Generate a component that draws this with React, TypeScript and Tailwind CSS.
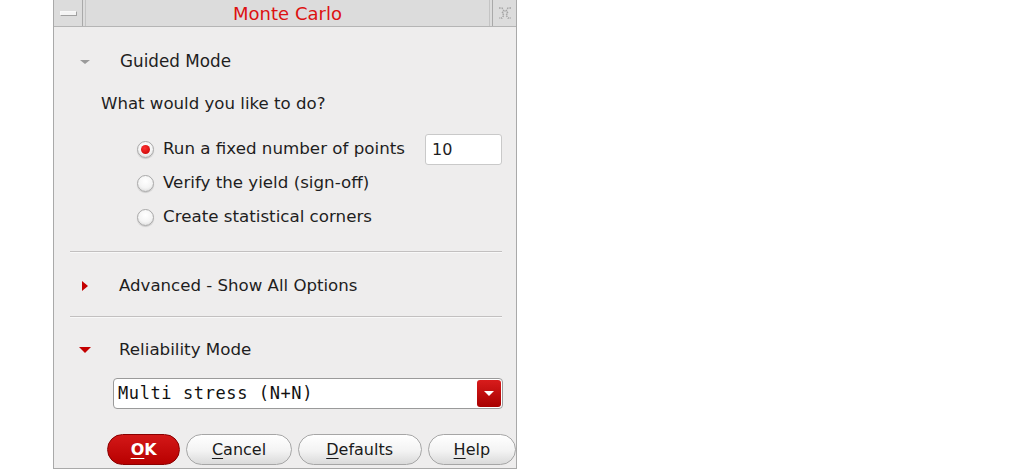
import { useState } from "react"

const ui = "font-['DejaVu_Sans',sans-serif]"

function Radio({ checked }: { checked: boolean }) {
    return (
        <span className="w-[17px] h-[17px] rounded-full border border-[#a9a9a9] bg-[radial-gradient(circle_at_50%_35%,#ffffff_0%,#f4f4f4_55%,#d2d2d2_100%)] shadow-[0_1px_1px_rgba(0,0,0,0.15)] flex items-center justify-center">
            {checked && <span className="w-[9px] h-[9px] rounded-full bg-[radial-gradient(circle_at_40%_35%,#ff3030,#c00000)]" />}
        </span>
    )
}

function PillButton({ label, accel, primary, width }: { label: string; accel: string; primary?: boolean; width: string }) {
    const rest = label.slice(1)
    return (
        <button
            className={
                primary
                    ? `${width} h-[31px] rounded-full border border-[#8a0000] bg-[linear-gradient(#d31818,#b80000)] text-white font-bold text-[16px] flex items-center justify-center`
                    : `${width} h-[31px] rounded-full border border-[#a6a6a6] bg-[linear-gradient(#ffffff,#f3f3f3_55%,#dadada)] text-[#1a1a1a] text-[16px] flex items-center justify-center`
            }
        >
            <span className="underline underline-offset-[3px]">{accel}</span>
            {rest}
        </button>
    )
}

function App() {
    const [points, setPoints] = useState("10")
    const [mode, setMode] = useState(0)

    return (
        <div className={`w-[1013px] h-[474px] bg-white ${ui}`}>
            <div className="ml-[53px] w-[464px] h-[469px] border-l border-r border-b border-[#a9a9a9] bg-[#eeeded] flex flex-col">
                {/* title bar */}
                <div className="h-[27px] flex bg-[#dcdcdc] border-b border-[#b5b5b5]">
                    <div className="w-[29px] border-r border-[#a9a9a9] flex items-center justify-center">
                        <span className="w-[17px] h-[5px] bg-[#f4f4f4] border border-[#a0a0a0] border-t-[#f8f8f8] border-l-[#f8f8f8]" />
                    </div>
                    <div className="flex-1 ml-[2px] border-l border-r border-[#c4c4c4] flex items-center justify-center text-[18px] text-[#dd1111]">
                        Monte Carlo
                    </div>
                    <div className="w-[24px] ml-[2px] border-l border-[#a9a9a9] flex items-center justify-center">
                        <svg width="16" height="16" viewBox="0 0 16 16" fill="none" stroke="#a4a4a4" strokeWidth="1.4" strokeDasharray="1.6 1">
                            <path d="M2 3 L5 3 L7 6 L5 8 L7 10 L5 13 L2 13 M14 3 L11 3 L9 6 L11 8 L9 10 L11 13 L14 13" />
                        </svg>
                    </div>
                </div>

                {/* guided mode */}
                <div className="mt-[20px] h-[30px] flex items-center">
                    <span className="ml-[26px] w-0 h-0 border-l-[5px] border-r-[5px] border-t-[4px] border-l-transparent border-r-transparent border-t-[#9a9a9a]" />
                    <span className="ml-[30px] text-[16.8px] text-[#1e1e1e]">Guided Mode</span>
                </div>

                <div className="mt-[12px] h-[30px] flex items-center pl-[47px] text-[16.6px] text-[#1e1e1e]">
                    What would you like to do?
                </div>

                <div className="mt-[13px] flex flex-col pl-[83px] text-[16.7px] text-[#1e1e1e]">
                    <div className="h-[34px] flex items-center" onClick={() => setMode(0)}>
                        <Radio checked={mode === 0} />
                        <span className="ml-[9px]">Run a fixed number of points</span>
                        <input
                            value={points}
                            onChange={(e) => setPoints(e.target.value)}
                            className="ml-[20px] w-[77px] h-[31px] rounded-[3px] border border-[#c9c9c9] bg-white px-[6px] text-[16px] text-[#1e1e1e] outline-none"
                        />
                    </div>
                    <div className="h-[34px] flex items-center" onClick={() => setMode(1)}>
                        <Radio checked={mode === 1} />
                        <span className="ml-[9px]">Verify the yield (sign-off)</span>
                    </div>
                    <div className="h-[34px] flex items-center" onClick={() => setMode(2)}>
                        <Radio checked={mode === 2} />
                        <span className="ml-[9px]">Create statistical corners</span>
                    </div>
                </div>

                <div className="mt-[17px] ml-[16px] w-[432px] h-[2px] bg-[#c2c0c0] border-b border-[#f8f8f8]" />

                {/* advanced */}
                <div className="mt-[18px] h-[30px] flex items-center">
                    <span className="ml-[28px] w-0 h-0 border-t-[5px] border-b-[5px] border-l-[6px] border-t-transparent border-b-transparent border-l-[#c40000]" />
                    <span className="ml-[31px] text-[16.6px] text-[#1e1e1e]">Advanced - Show All Options</span>
                </div>

                <div className="mt-[15px] ml-[16px] w-[432px] h-[2px] bg-[#c2c0c0] border-b border-[#f8f8f8]" />

                {/* reliability */}
                <div className="mt-[17px] h-[30px] flex items-center">
                    <span className="ml-[25px] w-0 h-0 border-l-[6px] border-r-[6px] border-t-[6px] border-l-transparent border-r-transparent border-t-[#c40000]" />
                    <span className="ml-[28px] text-[16.7px] text-[#1e1e1e]">Reliability Mode</span>
                </div>

                <div className="mt-[13px] ml-[59px] w-[390px] h-[31px] rounded-[4px] border border-[#9a9a9a] bg-white flex items-center">
                    <span className="flex-1 pl-[4px] font-['DejaVu_Sans_Mono',monospace] text-[17px] tracking-[0.6px] text-[#111]">
                        Multi stress (N+N)
                    </span>
                    <span className="w-[24px] h-[27px] mr-[1px] rounded-[3px] bg-[linear-gradient(#d81c1c,#a80000)] flex items-center justify-center">
                        <span className="w-0 h-0 border-l-[5px] border-r-[5px] border-t-[5px] border-l-transparent border-r-transparent border-t-white" />
                    </span>
                </div>

                {/* buttons */}
                <div className="mt-[25px] ml-[53px] flex gap-[6px]">
                    <PillButton label="OK" accel="O" primary width="w-[74px]" />
                    <PillButton label="Cancel" accel="C" width="w-[106px]" />
                    <PillButton label="Defaults" accel="D" width="w-[125px]" />
                    <PillButton label="Help" accel="H" width="w-[89px]" />
                </div>
            </div>
        </div>
    )
}

export default App
